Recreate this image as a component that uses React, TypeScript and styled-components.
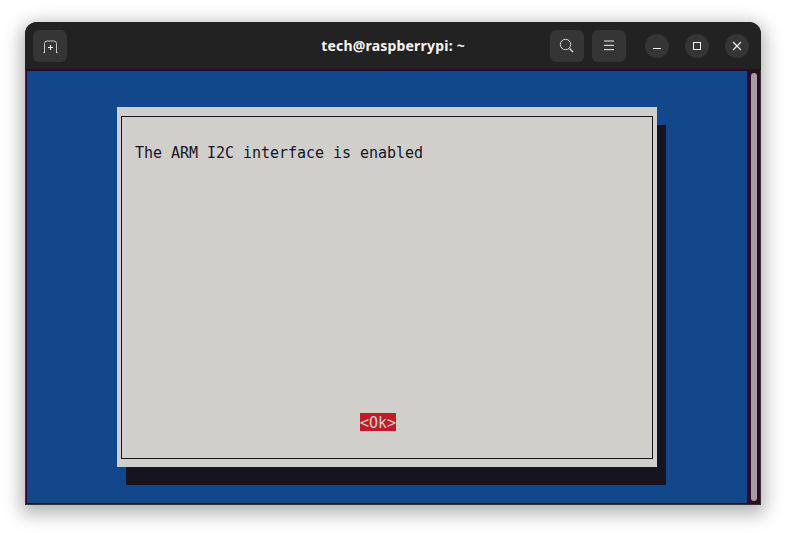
import React from 'react';
import styled, { createGlobalStyle } from 'styled-components';

const GlobalStyle = createGlobalStyle`
  html,
  body {
    margin: 0;
    padding: 0;
    background: #fff;
  }
`;

const Page = styled.div`
  width: 786px;
  height: 533px;
  box-sizing: border-box;
  padding: 22px 25px 28px;
  overflow: hidden;
`;

const WindowFrame = styled.div`
  border-radius: 12px 12px 1px 1px;
  box-shadow: 0 5px 18px 4px rgba(0, 0, 0, 0.3);
`;

const Window = styled.div`
  height: 483px;
  display: flex;
  flex-direction: column;
  border-radius: 12px 12px 1px 1px;
  overflow: hidden;
  background: #222;
`;

const HeaderBar = styled.header`
  height: 48px;
  flex: none;
  box-sizing: border-box;
  padding: 8px 8px 7px;
  display: grid;
  grid-template-columns: 1fr auto 1fr;
  align-items: center;
  background: #222;
  border-bottom: 1px solid #161616;
`;

const HeaderStart = styled.div`
  display: flex;
  justify-content: flex-start;
`;

const HeaderEnd = styled.div`
  display: flex;
  justify-content: flex-end;
  align-items: center;
  gap: 8px;
  padding-right: 4px;
`;

const Title = styled.h1`
  margin: 0;
  color: #f6f6f6;
  font: 700 14px/18px 'Noto Sans', sans-serif;
  letter-spacing: 0.2px;
`;

const HeaderButton = styled.button`
  width: 34px;
  height: 32px;
  padding: 0;
  border: none;
  border-radius: 6px;
  background: #353535;
  color: #f0f0f0;
  display: flex;
  align-items: center;
  justify-content: center;
`;

const WindowControls = styled.div`
  margin-left: 11px;
  display: flex;
  gap: 16px;
`;

const RoundButton = styled.button`
  width: 24px;
  height: 24px;
  padding: 0;
  border: none;
  border-radius: 50%;
  background: #353535;
  color: #f0f0f0;
  display: flex;
  align-items: center;
  justify-content: center;
`;

const Terminal = styled.main`
  flex: 1;
  min-height: 0;
  display: flex;
  background: #300a24;
  padding: 1px 0 1px 1px;
  border: solid #333;
  border-width: 0 1px 1px;
`;

const Screen = styled.div`
  width: 720px;
  flex: none;
  background: #12488b;
  padding: 36px 90px 0;
  box-sizing: border-box;
`;

const Dialog = styled.section`
  width: 540px;
  height: 360px;
  box-sizing: border-box;
  padding: 9px 4px 8px;
  background: #d0cfcc;
  box-shadow: 9px 18px 0 #171421;
`;

const DialogFrame = styled.div`
  height: 100%;
  box-sizing: border-box;
  border: 1px solid #171421;
  padding: 26px 13px 27px;
  display: flex;
  flex-direction: column;
  font: 15px/20px 'DejaVu Sans Mono', monospace;
  letter-spacing: -0.03px;
  color: #171421;
`;

const Message = styled.p`
  margin: 0;
  height: 18px;
  white-space: pre;
`;

const OkButton = styled.span`
  margin-top: auto;
  align-self: flex-start;
  margin-left: 225px;
  height: 18px;
  background: #c01c28;
  color: #d0cfcc;
`;

const ScrollTrack = styled.div`
  flex: 1;
  box-sizing: border-box;
  padding: 2px 3px 2px 4px;
  display: flex;
`;

const ScrollThumb = styled.div`
  flex: 1;
  border-radius: 3px;
  background: #a59da2;
`;

const New = () => (
  <svg width="16" height="16" viewBox="0 0 16 16" fill="none" stroke="currentColor" strokeWidth="1">
    <path d="M2.5 14V5.5A2.5 2.5 0 0 1 5 3h7a2.5 2.5 0 0 1 2.5 2.5V14" stroke="#c8c8c8" />
    <path d="M1.5 14.5H3M14 14.5h1.5" />
    <path d="M8.5 7v5M6 9.5h5" strokeWidth="1.2" />
  </svg>
);

const Search = () => (
  <svg width="16" height="16" viewBox="0 0 16 16" fill="none" stroke="#d8d8d8" strokeWidth="1">
    <circle cx="6.5" cy="6.5" r="5.2" />
    <path d="M10.5 10.5L14 14" strokeWidth="1.4" />
  </svg>
);

const Menu = () => (
  <svg width="16" height="16" viewBox="0 0 16 16" fill="none" stroke="currentColor" strokeWidth="1">
    <path d="M3 3h10M3 7.33h10M3 11.67h10" />
  </svg>
);

const Minimize = () => (
  <svg width="16" height="16" viewBox="0 0 16 16" fill="none" stroke="currentColor" strokeWidth="1">
    <path d="M4 10.5h8" />
  </svg>
);

const Maximize = () => (
  <svg width="16" height="16" viewBox="0 0 16 16" fill="none" stroke="currentColor" strokeWidth="1">
    <rect x="4.5" y="4.5" width="7" height="7" />
  </svg>
);

const Close = () => (
  <svg width="16" height="16" viewBox="0 0 16 16" fill="none" stroke="currentColor" strokeWidth="1.2">
    <path d="M4 4l8 8M12 4l-8 8" />
  </svg>
);

const App: React.FC = () => (
  <Page>
    <GlobalStyle />
    <WindowFrame>
      <Window>
        <HeaderBar>
          <HeaderStart>
            <HeaderButton type="button" aria-label="New tab">
              <New />
            </HeaderButton>
          </HeaderStart>
          <Title>tech@raspberrypi: ~</Title>
          <HeaderEnd>
            <HeaderButton type="button" aria-label="Search">
              <Search />
            </HeaderButton>
            <HeaderButton type="button" aria-label="Menu">
              <Menu />
            </HeaderButton>
            <WindowControls>
              <RoundButton type="button" aria-label="Minimize">
                <Minimize />
              </RoundButton>
              <RoundButton type="button" aria-label="Maximize">
                <Maximize />
              </RoundButton>
              <RoundButton type="button" aria-label="Close">
                <Close />
              </RoundButton>
            </WindowControls>
          </HeaderEnd>
        </HeaderBar>
        <Terminal>
          <Screen>
            <Dialog>
              <DialogFrame>
                <Message>The ARM I2C interface is enabled</Message>
                <OkButton>&lt;Ok&gt;</OkButton>
              </DialogFrame>
            </Dialog>
          </Screen>
          <ScrollTrack>
            <ScrollThumb />
          </ScrollTrack>
        </Terminal>
      </Window>
    </WindowFrame>
  </Page>
);

export default App;
